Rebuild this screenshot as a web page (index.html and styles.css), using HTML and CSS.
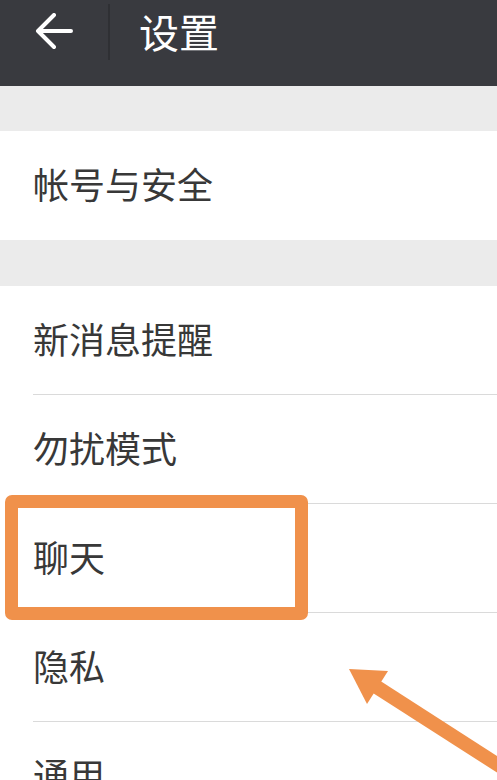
FILE: index.html
```html
<!DOCTYPE html>
<html lang="zh-CN">
<head>
    <meta charset="UTF-8">
    <meta name="viewport" content="width=device-width, initial-scale=1.0">
    <title>设置</title>
    <link rel="stylesheet" href="styles.css">
</head>
<body>
    <div class="screen">
        <header class="topbar">
            <div class="topbar-inner">
                <div class="back">
                    <svg width="40" height="40" viewBox="0 0 40 40">
                        <path d="M37 18 H5 M20 2 L4 18 L20 34" fill="none" stroke="#fff" stroke-width="4" stroke-linecap="round" stroke-linejoin="round"/>
                    </svg>
                </div>
                <div class="divider"></div>
                <h1 class="title">设置</h1>
            </div>
        </header>

        <div class="gap"></div>
        <div class="group">
            <div class="item"><span class="label">帐号与安全</span></div>
        </div>

        <div class="gap"></div>
        <div class="group">
            <div class="item"><span class="label">新消息提醒</span></div>
            <div class="item"><span class="label">勿扰模式</span></div>
            <div class="item"><span class="label">聊天</span></div>
            <div class="item"><span class="label">隐私</span></div>
            <div class="item"><span class="label">通用</span></div>
        </div>

        <!-- annotation drawn over the screenshot -->
        <div class="highlight"></div>
        <svg class="pointer" width="497" height="780" viewBox="0 0 497 780">
            <line x1="372" y1="684" x2="520" y2="779" stroke="#f0914b" stroke-width="14"/>
            <polygon points="349,669 388,671 367,704" fill="#f0914b"/>
        </svg>
    </div>
</body>
</html>
```

FILE: styles.css
```css
body {
    margin: 0;
    background: #fff;
    font-family: "Noto Sans CJK SC", "Noto Sans", sans-serif;
}

.screen {
    position: relative;
    width: 497px;
    height: 780px;
    overflow: hidden;
}

.topbar {
    height: 86px;
    background: #393a3f;
}

.topbar-inner {
    height: 64px;
    display: flex;
    align-items: center;
}

.back {
    width: 108px;
    display: flex;
    justify-content: center;
    padding-top: 1px;
}

.back svg {
    display: block;
}

.divider {
    width: 2px;
    height: 56px;
    background: #2f3034;
}

.title {
    margin: 0;
    padding-left: 29px;
    padding-bottom: 2px;
    color: #fff;
    font-size: 40px;
    font-weight: 400;
    line-height: 1;
}

.gap {
    height: 45px;
    background: #ebebeb;
}

.group + .gap {
    height: 46px;
}

.item {
    padding-left: 33px;
    background: #fff;
}

.label {
    display: flex;
    align-items: center;
    box-sizing: border-box;
    height: 109px;
    padding-bottom: 5px;
    border-bottom: 1px solid #dadada;
    color: #383838;
    font-size: 36px;
}

.group:first-of-type .label,
.item:last-child .label {
    border-bottom: none;
}

.highlight {
    position: absolute;
    left: 5px;
    top: 495px;
    width: 303px;
    height: 125px;
    box-sizing: border-box;
    border: 13px solid #f0914b;
    border-radius: 7px;
}

.pointer {
    position: absolute;
    left: 0;
    top: 0;
}
```
